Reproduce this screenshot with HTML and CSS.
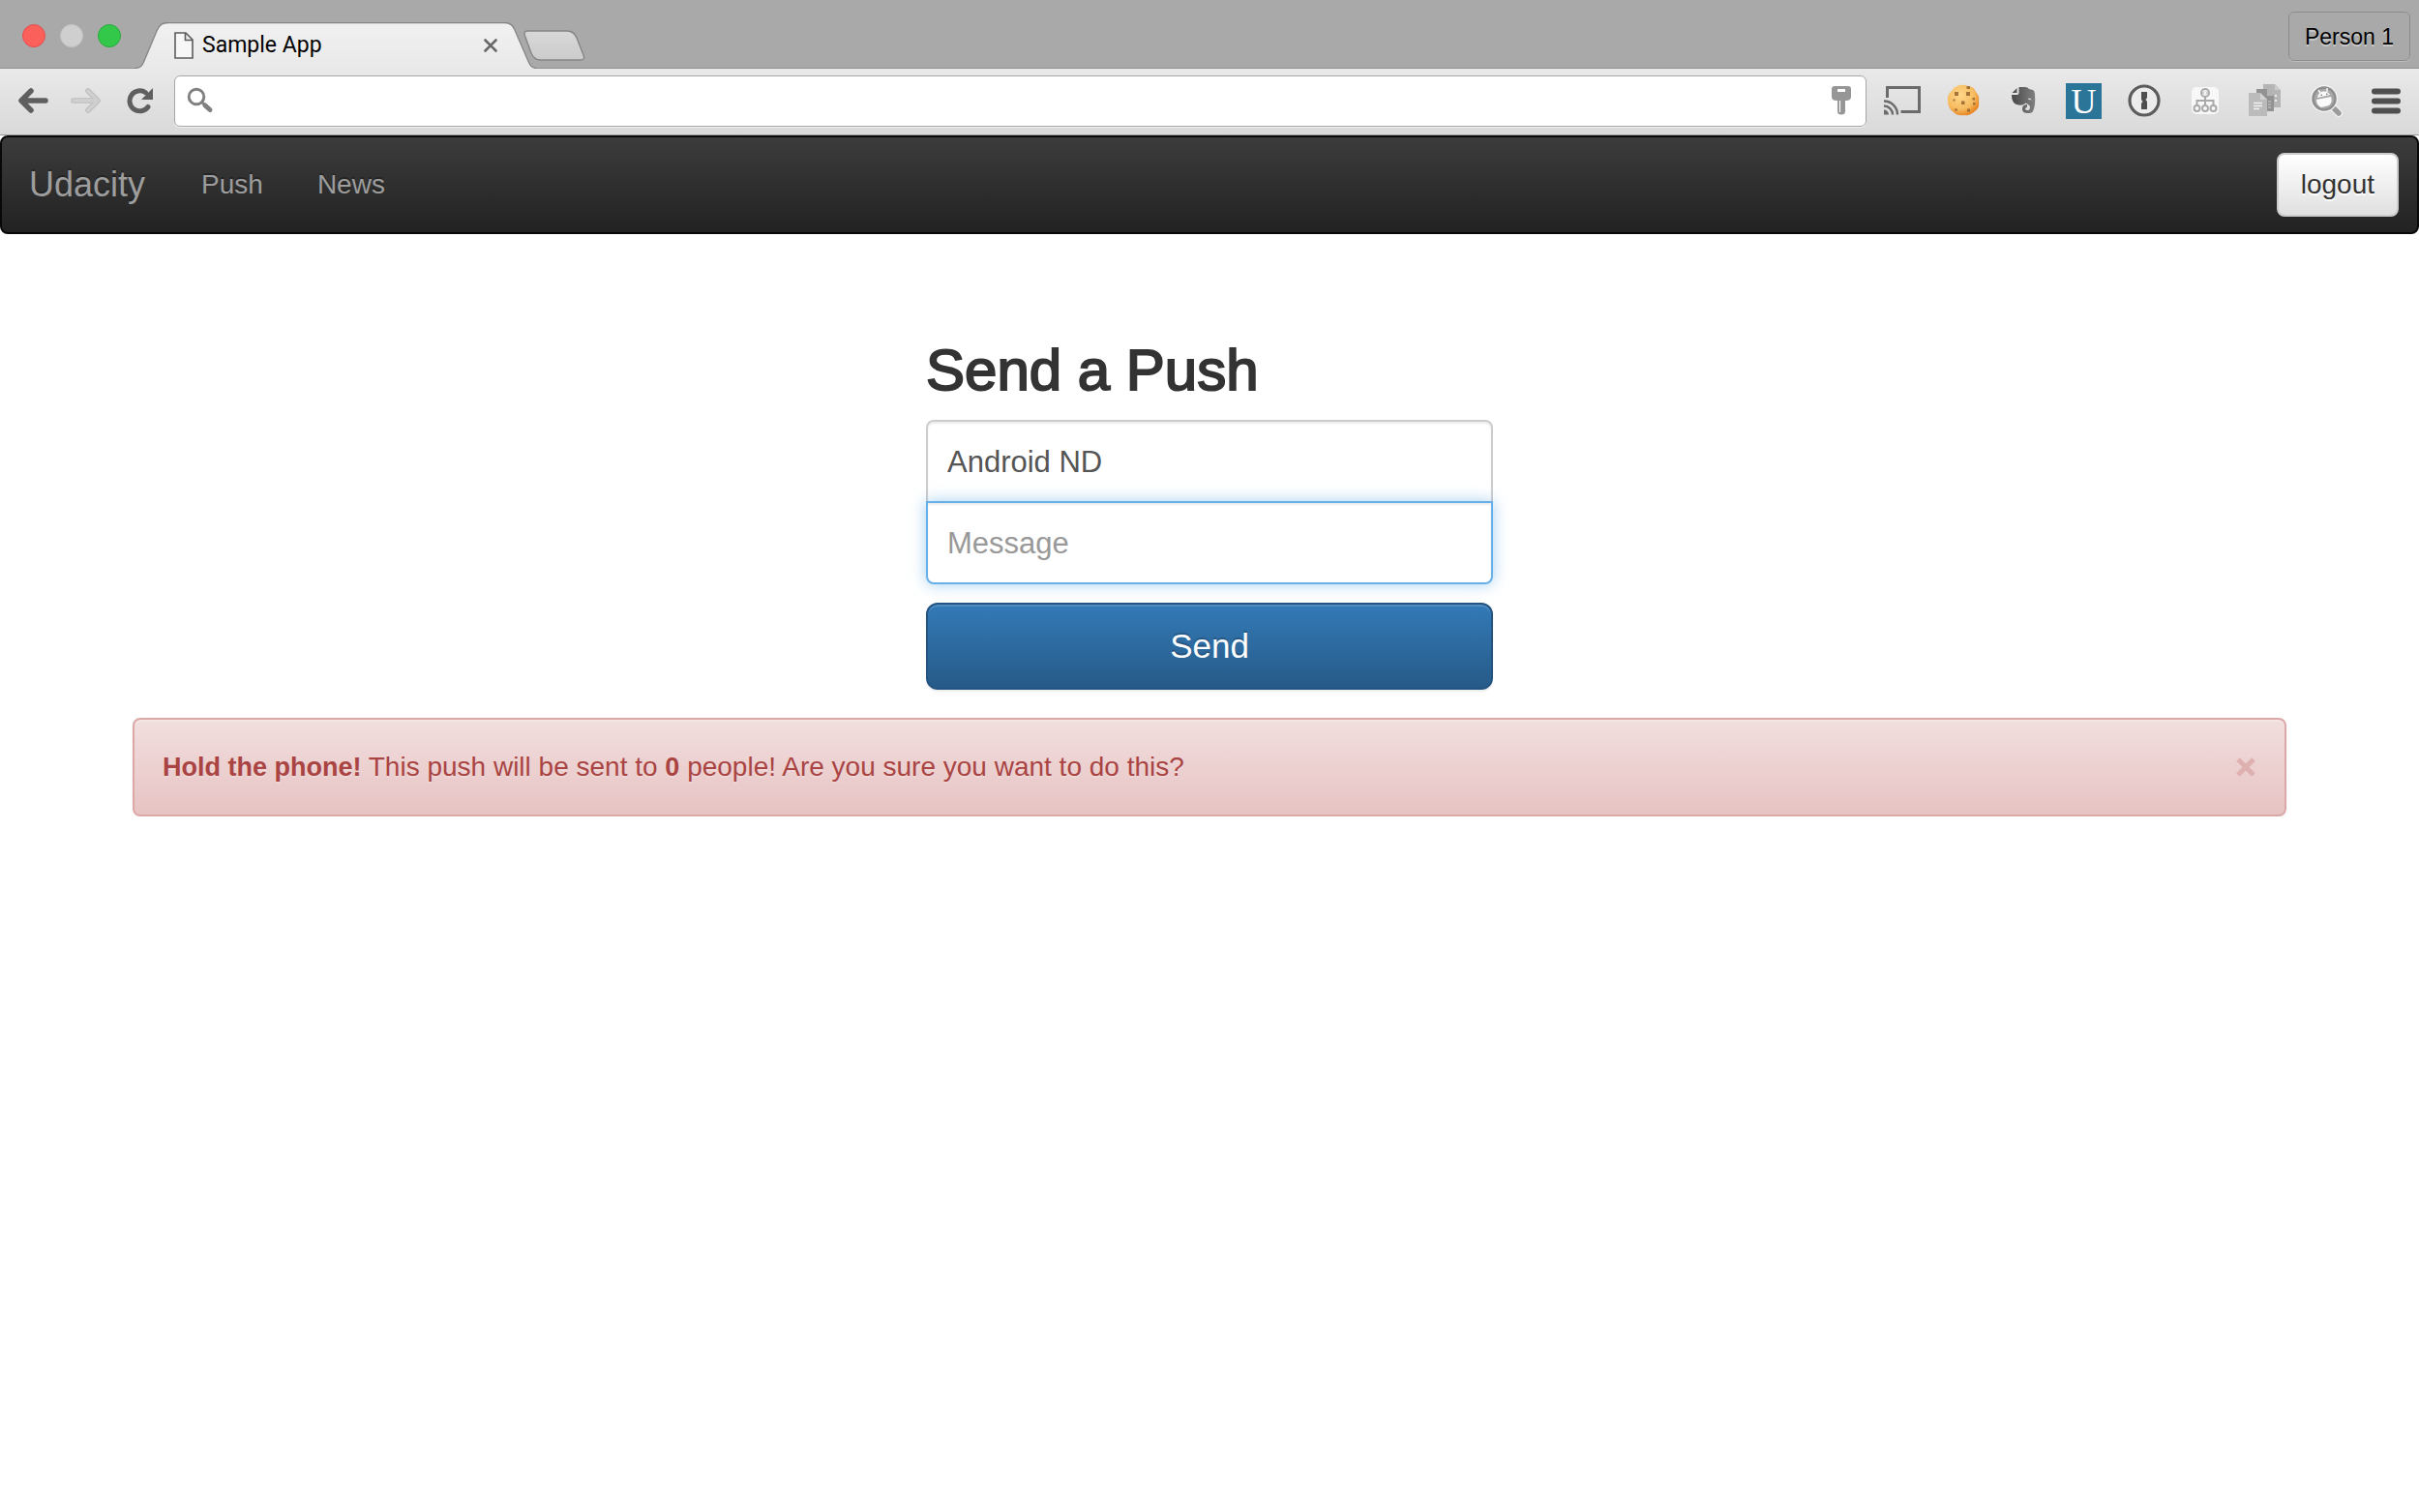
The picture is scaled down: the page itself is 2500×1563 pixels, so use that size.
FILE: index.html
```html
<!DOCTYPE html>
<html lang="en">
<head>
<meta charset="utf-8">
<meta name="viewport" content="width=device-width, initial-scale=1">
<title>Sample App</title>
<link rel="stylesheet" href="styles.css">
</head>
<body>
<header class="browser">
  <div class="tabstrip">
    <div class="lights">
      <button class="light light-close" aria-label="Close window"></button>
      <button class="light light-min" aria-label="Minimize window"></button>
      <button class="light light-zoom" aria-label="Zoom window"></button>
    </div>
    <div class="tab">
      <svg class="tab-shape" viewBox="0 0 414 48" aria-hidden="true">
        <defs><linearGradient id="tabfill" x1="0" y1="0" x2="0" y2="1"><stop offset="0" stop-color="#f1f1f1"/><stop offset="1" stop-color="#e9e9e9"/></linearGradient></defs>
        <path d="M0 47.500C5 47 7 45 9 40L22 9C25 2 28 .5 34 .5H382C387 .5 390 3 392 8L405 38C408 45 409 47 414 47.500V48H0Z" fill="url(#tabfill)"/>
        <path d="M0 47.500C5 47 7 45 9 40L22 9C25 2 28 .5 34 .5H382C387 .5 390 3 392 8L405 38C408 45 409 47 414 47.500" fill="none" stroke="#858585" stroke-width="1.300"/>
      </svg>
      <svg class="page-icon" viewBox="0 0 20 28" aria-hidden="true"><path d="M1 1H12L19 8V27H1ZM11.500 1V8.500H19" fill="#f7f7f7" stroke="#5c5c5c" stroke-width="1.600"/></svg>
      <span class="tab-title">Sample App</span>
      <button class="tab-close" aria-label="Close tab"><svg viewBox="0 0 14 14"><path d="M1.500 1.500L12.500 12.500M12.500 1.500L1.500 12.500" stroke="#666" stroke-width="2.600" stroke-linecap="round"/></svg></button>
    </div>
    <button class="new-tab" aria-label="New tab"><svg viewBox="0 0 64 33"><defs><linearGradient id="nt" x1="0" y1="0" x2="0" y2="1"><stop offset="0" stop-color="#d8d8d8"/><stop offset="1" stop-color="#cbcbcb"/></linearGradient></defs><path d="M4 1H45Q52 1 55 8L62 26Q64 31 59 31H18Q11 31 8 24L1.500 6Q0 1 4 1Z" fill="url(#nt)" stroke="#858585" stroke-width="1.400"/></svg></button>
    <button class="person">Person 1</button>
  </div>
  <div class="toolbar">
    <div class="history">
      <button class="tool" aria-label="Back"><svg viewBox="0 0 32 28"><path d="M29 14H5M14 4L4 14L14 24" fill="none" stroke="#5f5f5f" stroke-width="5.500" stroke-linecap="round" stroke-linejoin="round"/></svg></button>
      <button class="tool" aria-label="Forward"><svg viewBox="0 0 32 28"><path d="M3 14H27M18 4L28 14L18 24" fill="none" stroke="#bdbdbd" stroke-width="5.500" stroke-linecap="round" stroke-linejoin="round"/><path d="M3 14H27M18 4L28 14L18 24" fill="none" stroke="#cfcfcf" stroke-width="3.500" stroke-linecap="round" stroke-linejoin="round"/></svg></button>
      <button class="tool" aria-label="Reload"><svg viewBox="0 0 32 28"><path d="M25 20.500A10.500 10.500 0 1 1 22.500 5.700" fill="none" stroke="#5f5f5f" stroke-width="5" stroke-linecap="round"/><path d="M30 1V13H18Z" fill="#5f5f5f"/></svg></button>
    </div>
    <label class="omnibox">
      <svg class="search-icon" viewBox="0 0 28 28" aria-hidden="true"><circle cx="10" cy="10" r="7.800" fill="none" stroke="#808080" stroke-width="2.900"/><path d="M15.500 15.500L18 18" stroke="#808080" stroke-width="3"/><path d="M19 19L24 23.500" stroke="#808080" stroke-width="5" stroke-linecap="round"/></svg>
      <input class="address" type="text" aria-label="Address and search bar">
      <svg class="key-icon" viewBox="0 0 20 30" aria-hidden="true"><path d="M3 0H17Q20 0 20 3V11Q20 15 15 15H14V26Q14 29.500 10 29.500Q6 29.500 6 26V15H5Q0 15 0 11V3Q0 0 3 0Z" fill="#969696"/><rect x="6" y="3" width="8" height="3" fill="#fff"/><path d="M8.500 15V27" stroke="#fff" stroke-width="1.200"/></svg>
    </label>
    <div class="extensions">
      <button class="tool tool-ext" aria-label="Cast"><svg viewBox="0 0 40 40"><path d="M4.500 17V6.500H37.500V31.500H18.500" fill="none" stroke="#6b6b6b" stroke-width="3"/><g fill="none" stroke="#6b6b6b" stroke-width="2.400"><path d="M1 20.500A14 14 0 0 1 15 34.500M1 25.500A9 9 0 0 1 10 34.500"/></g><path d="M1 29.500A5 5 0 0 1 6 34.500H1Z" fill="#6b6b6b"/></svg></button>
      <button class="tool tool-ext" aria-label="Cookies"><svg viewBox="0 0 40 40"><defs><radialGradient id="ck" cx=".4" cy=".35" r=".65"><stop offset="0" stop-color="#ffd78a"/><stop offset=".7" stop-color="#f6bb60"/><stop offset="1" stop-color="#e88a28"/></radialGradient></defs><path d="M17 4Q21 3 25 5Q31 5 33 11Q37 15 36 21Q37 28 32 31Q27 36 21 35Q14 36 10 32Q4 28 4 20Q3 14 8 10Q11 5 17 4Z" fill="url(#ck)"/><g fill="#94642f" opacity=".85"><path d="M11 11h4v4h-4zM23.500 5h3.500v3h-3.500zM23 11h4v4h-4zM18 20.500h3.500v3.500h-3.500zM9.500 18.500h2v2h-2zM29.500 17h2.500v2.500h-2.500zM30 22h2.500v2.500h-2.500zM24 28.500h3v3h-3zM11 28.500h3v2h-3z"/></g></svg></button>
      <button class="tool tool-ext" aria-label="Evernote"><svg viewBox="0 0 40 40"><defs><linearGradient id="ev" x1="0" y1="0" x2="1" y2="0"><stop offset="0" stop-color="#484848"/><stop offset="1" stop-color="#808080"/></linearGradient></defs><path d="M15.500 6H22Q25 6 26 8L30 9Q32 10 32 14Q33 25 30 31Q29 33 25 33Q19 33 19 28.500Q19 24 24 24V27Q22 27 22 29Q22 30 25 30Q27 30 27 26Q25 23 22.500 22.500Q19 26 13 24Q8 22 8 14H13.500Q15.500 14 15.500 12Z" fill="url(#ev)"/><path d="M8.500 12L13.500 7V12Z" fill="#555"/><path d="M24.500 18.500Q27 16 28.500 19.500Q26 18.500 24.500 18.500Z" fill="#eee"/></svg></button>
      <button class="tool tool-ext" aria-label="Udacity extension"><span class="udacity-mark">U</span></button>
      <button class="tool tool-ext" aria-label="Password manager"><svg viewBox="0 0 40 40"><circle cx="20" cy="20" r="15" fill="#ececec" stroke="#5c5c5c" stroke-width="3.200"/><path d="M17 11H23V17L21.500 19L23 21V29H17V23L18.500 21L17 19Z" fill="#4f4f4f"/></svg></button>
      <button class="tool tool-ext" aria-label="Sitemap"><svg viewBox="0 0 40 40"><rect x="6" y="6" width="28" height="28" rx="5" fill="#f8f8f8"/><g fill="none" stroke="#a9a9a9" stroke-width="2"><circle cx="20" cy="12" r="4"/><circle cx="11.500" cy="28" r="3"/><circle cx="20" cy="28" r="3"/><circle cx="28.500" cy="28" r="3"/><path d="M20 16V25M11.500 25V20H28.500V25"/></g><path d="M19 10.500L17.500 12L19 13.500M21 10.500L22.500 12L21 13.500" fill="none" stroke="#a9a9a9"/></svg></button>
      <button class="tool tool-ext" aria-label="Copy pages"><svg viewBox="0 0 40 40"><path d="M18 3H30L36 9V27H18Z" fill="#b5b5b5"/><path d="M30 3V9H36Z" fill="#ccc"/><path d="M30 14h2v2h-2zM30 19h2v2h-2z" fill="#eee"/><path d="M11 8H22L29 15V31H11Z" fill="#929292"/><path d="M22 8V15H29Z" fill="#b5b5b5"/><path d="M23 21H26M23 24H26M23 27H26" stroke="#ccc"/><path d="M3 12H15L22 19V36H3Z" fill="#bbb"/><path d="M15 12V19H22Z" fill="#d2d2d2"/><path d="M8 22.500H17M8 25.500H17M8 28.500H14" stroke="#f1f1f1" stroke-width="1.600"/></svg></button>
      <button class="tool tool-ext" aria-label="Android search"><svg viewBox="0 0 40 40"><path d="M27 27L33 33" stroke="#f3f3f3" stroke-width="8" stroke-linecap="round"/><path d="M25 25L33 33" stroke="#9c9c9c" stroke-width="5.500" stroke-linecap="round"/><circle cx="18" cy="18" r="12" fill="#aaa" stroke="#f3f3f3" stroke-width="4"/><circle cx="18" cy="18" r="11.500" fill="#a9a9a9" stroke="#8e8e8e" stroke-width="2.500"/><path d="M11 17Q12 11 17 10.500Q22 10 24 14ZM10 19L25 16Q27 22 23 25L15 27Q10 25 10 19Z" fill="#fafafa"/><path d="M12 9L14 12M21 7L21 11" stroke="#fafafa" stroke-width="1.400"/><path d="M14.500 13.500h1.500v1.500h-1.500zM20 12.500h1.500v1.500h-1.500z" fill="#888"/></svg></button>
      <button class="tool tool-ext" aria-label="Menu"><svg viewBox="0 0 40 40"><path d="M8 10.500H32M8 20.500H32M8 30.500H32" stroke="#4f4f4f" stroke-width="6" stroke-linecap="round"/></svg></button>
    </div>
  </div>
</header>

<nav class="navbar">
  <a class="brand" href="#">Udacity</a>
  <a class="nav-link" href="#">Push</a>
  <a class="nav-link" href="#">News</a>
  <button class="logout">logout</button>
</nav>

<main class="container">
  <form class="push-form">
    <h2 class="form-title">Send a Push</h2>
    <input class="field field-top" type="text" value="Android ND" aria-label="Audience">
    <input class="field field-bottom" type="text" placeholder="Message" aria-label="Message">
    <button class="send" type="button">Send</button>
  </form>
  <div class="alert" role="alert">
    <p class="alert-text"><strong>Hold the phone!</strong> This push will be sent to <strong>0</strong> people! Are you sure you want to do this?</p>
    <button class="alert-close" aria-label="Dismiss"><svg viewBox="0 0 20 20"><path d="M2 2L18 18M18 2L2 18" stroke="#dfb0b0" stroke-width="5"/></svg></button>
  </div>
</main>
</body>
</html>
```
FILE: styles.css
```css
* { box-sizing: border-box; }

body {
  margin: 0;
  background: #fff;
  color: #333;
  font: 28px/40px "Liberation Sans", Arial, sans-serif;
}

button {
  margin: 0;
  padding: 0;
  border: 0;
  background: none;
  font-family: inherit;
}

svg { display: block; }

/* Browser window frame */
.tabstrip {
  display: flex;
  align-items: flex-start;
  height: 70px;
  padding: 0 9px 0 23px;
  background: #a9a9a9;
}

.lights {
  display: flex;
  gap: 15px;
  padding-top: 25px;
}

.light {
  width: 24px;
  height: 24px;
  border: 1px solid;
  border-radius: 50%;
}

.light-close { background: #fc605b; border-color: #e2504b; }
.light-min { background: #cfcfcf; border-color: #c4c4c4; }
.light-zoom { background: #34c84a; border-color: #27ab3a; }

.tab {
  position: relative;
  display: flex;
  align-items: center;
  width: 414px;
  height: 48px;
  margin: 23px 0 0 15px;
  padding: 0 40px;
}

.tab-shape {
  position: absolute;
  inset: 0;
  width: 414px;
  height: 48px;
}

.page-icon {
  position: relative;
  width: 20px;
  height: 28px;
}

.tab-title {
  position: relative;
  flex: 1;
  margin-left: 9px;
  color: #000;
  font: 23px/48px Roboto, sans-serif;
}

.tab-close {
  position: relative;
  width: 14px;
}

.new-tab {
  width: 64px;
  margin: 31px 0 0 -13px;
}

.person {
  height: 51px;
  margin: 12px 0 0 auto;
  padding: 2px 16px 0;
  border: 1px solid #8b8b8b;
  border-radius: 6px;
  box-shadow: 0 1px 0 #bdbdbd;
  background: #a9a9a9;
  color: #000;
  font-size: 23px;
  text-shadow: 0 2px 0 #c9c9c9;
}

.toolbar {
  display: flex;
  align-items: center;
  height: 70px;
  padding: 0 14px 2px 18px;
  border-top: 1px solid #8f8f8f;
  border-bottom: 1px solid #9a9a9a;
  background: linear-gradient(#e9e9e9, #d9d9d9);
}

.history {
  display: flex;
  gap: 23px;
  margin-right: 20px;
}

.tool { width: 32px; }

.omnibox {
  display: flex;
  align-items: center;
  flex: 1;
  height: 53px;
  padding: 0 15px 0 12px;
  border: 1px solid #a6a6a6;
  border-radius: 6px;
  box-shadow: 0 1px 0 #f1f1f1;
  background: #fff;
}

.search-icon { width: 28px; }
.key-icon { width: 20px; }

.address {
  flex: 1;
  min-width: 0;
  border: 0;
  outline: 0;
  background: none;
  font: 28px/40px Roboto, sans-serif;
}

.extensions {
  display: flex;
  justify-content: space-between;
  width: 540px;
  margin-left: 17px;
}

.tool-ext {
  display: grid;
  place-items: center;
  width: 40px;
  height: 40px;
}

.tool-ext svg {
  width: 40px;
  height: 40px;
}

.udacity-mark {
  width: 37px;
  height: 37px;
  background: #2b7599;
  color: #fff;
  font: 36px/38px "Liberation Serif", serif;
  text-align: center;
}

/* Site navigation */
.navbar {
  display: flex;
  align-items: center;
  min-height: 102px;
  padding: 0 19px 0 28px;
  border: 2px solid #080808;
  border-radius: 8px;
  background: linear-gradient(#3c3c3c, #222);
  text-shadow: 0 -2px 0 rgba(0, 0, 0, .25);
}

.brand {
  margin-right: 30px;
  color: #9d9d9d;
  font-size: 36px;
  text-decoration: none;
}

.nav-link {
  padding: 0 28px;
  color: #9d9d9d;
  text-decoration: none;
}

.logout {
  height: 66px;
  margin-left: auto;
  padding: 0 23px;
  border: 2px solid #ccc;
  border-radius: 8px;
  background: linear-gradient(#fff, #e0e0e0);
  color: #333;
  font-size: 28px;
  text-shadow: 0 2px 0 #fff;
}

/* Page content */
.container { padding: 108px 137px 0; }

.push-form {
  display: flex;
  flex-direction: column;
  max-width: 586px;
  margin: 0 auto 29px;
}

.form-title {
  margin: 0 0 19px;
  font-size: 60px;
  font-weight: 400;
  line-height: 65px;
  -webkit-text-stroke: 2px #333;
}

.field {
  height: 86px;
  padding: 2px 20px 0;
  border: 2px solid #ccc;
  outline: 0;
  background: #fff;
  box-shadow: inset 0 2px 2px rgba(0, 0, 0, .075);
  color: #555;
  font: 31px/44px "Liberation Sans", Arial, sans-serif;
}

.field::placeholder {
  color: #999;
  opacity: 1;
}

.field-top { border-radius: 8px 8px 0 0; }

.field-bottom {
  z-index: 1;
  margin: -2px 0 19px;
  border-color: #66afe9;
  border-radius: 0 0 8px 8px;
  box-shadow: inset 0 2px 2px rgba(0, 0, 0, .075), 0 0 16px rgba(102, 175, 233, .6);
}

.send {
  height: 90px;
  border: 2px solid #245580;
  border-radius: 12px;
  background: linear-gradient(#337ab7, #265a88);
  box-shadow: inset 0 2px 0 rgba(255, 255, 255, .15), 0 2px 2px rgba(0, 0, 0, .075);
  color: #fff;
  font-size: 35px;
  text-shadow: 0 -2px 0 rgba(0, 0, 0, .2);
}

.alert {
  display: flex;
  align-items: center;
  justify-content: space-between;
  min-height: 102px;
  padding: 0 30px 0 29px;
  border: 2px solid #dca7a7;
  border-radius: 8px;
  background: linear-gradient(#f2dede, #e7c3c3);
  box-shadow: inset 0 2px 0 rgba(255, 255, 255, .25), 0 2px 4px rgba(0, 0, 0, .05);
  color: #a94442;
  text-shadow: 0 2px 0 rgba(255, 255, 255, .2);
}

.alert-text { margin: 0; }

.alert-text strong { font-size: 27px; }

.alert-close { width: 20px; }
```
